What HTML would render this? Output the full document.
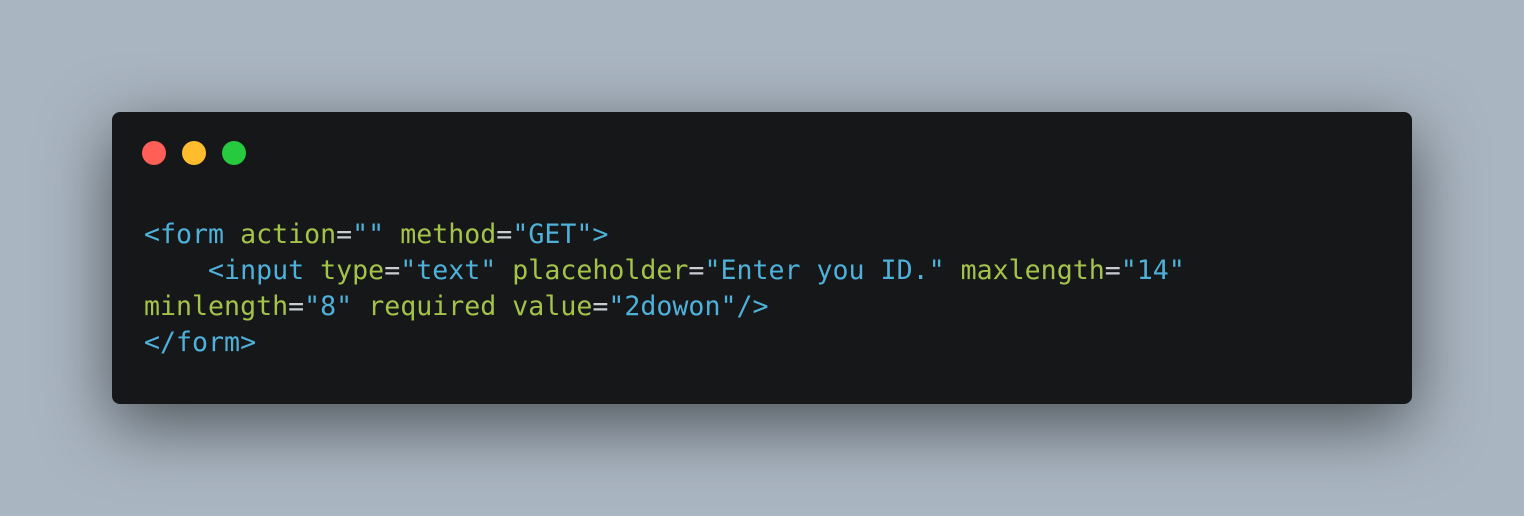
<!DOCTYPE html>
<html><head><style>
html,body{margin:0;padding:0;width:1524px;height:516px;background:#a9b5c1;overflow:hidden}
.win{position:absolute;left:112px;top:112px;width:1300px;height:292px;background:#161719;border-radius:8px;box-shadow:0 20px 68px rgba(0,0,0,0.55)}
.dot{position:absolute;top:29px;width:24px;height:24px;border-radius:50%}
pre{position:absolute;left:32px;top:105px;margin:0;font-family:"DejaVu Sans Mono","Liberation Mono",monospace;font-size:26.6px;line-height:36px;color:#c9cdd1;white-space:pre}
.t{color:#4fb1d9}.a{color:#a5c34b}.s{color:#4fb1d9}
</style></head><body>
<div class="win">
<div class="dot" style="left:30px;background:#ff5f56"></div>
<div class="dot" style="left:70px;background:#ffbd2e"></div>
<div class="dot" style="left:110px;background:#27c93f"></div>
<pre><span class="t">&lt;form</span> <span class="a">action</span>=<span class="s">""</span> <span class="a">method</span>=<span class="s">"GET"</span><span class="t">&gt;</span>
    <span class="t">&lt;input</span> <span class="a">type</span>=<span class="s">"text"</span> <span class="a">placeholder</span>=<span class="s">"Enter you ID."</span> <span class="a">maxlength</span>=<span class="s">"14"</span>
<span class="a">minlength</span>=<span class="s">"8"</span> <span class="a">required</span> <span class="a">value</span>=<span class="s">"2dowon"</span><span class="t">/&gt;</span>
<span class="t">&lt;/form&gt;</span></pre>
</div>
</body></html>
